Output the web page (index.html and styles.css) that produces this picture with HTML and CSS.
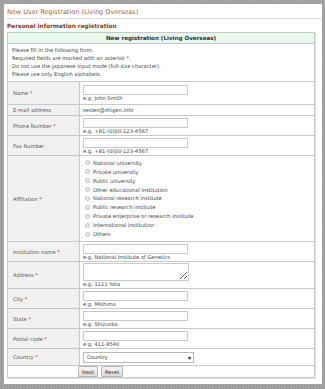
FILE: index.html
```html
<!DOCTYPE html>
<html lang="en">
<head>
    <meta charset="UTF-8">
    <meta name="viewport" content="width=device-width, initial-scale=1.0">
    <title>New User Registration (Living Overseas)</title>
    <link rel="stylesheet" href="styles.css">
</head>
<body>
    <div class="page">
        <h1 class="page-title">New User Registration (Living Overseas)</h1>
        <h2 class="section-title">Personal information registration</h2>
        <form class="reg-form">
            <table class="reg-table">
                <tr>
                    <th colspan="2" class="table-head">New registration (Living Overseas)</th>
                </tr>
                <tr>
                    <td colspan="2" class="notes">
                        Please fill in the following form.<br>
                        Required fields are marked with an asterisk <span class="req">*</span>.<br>
                        Do not use the Japanese input mode (full-size character).<br>
                        Please use only English alphabets.
                    </td>
                </tr>
                <tr class="row-name">
                    <td class="label">Name <span class="req">*</span></td>
                    <td class="value"><input type="text" class="text-in"><div class="hint">e.g. John Smith</div></td>
                </tr>
                <tr class="row-mail">
                    <td class="label">E-mail address</td>
                    <td class="value">testen@shigen.info</td>
                </tr>
                <tr class="row-std">
                    <td class="label">Phone Number <span class="req">*</span></td>
                    <td class="value"><input type="text" class="text-in"><div class="hint">e.g. +81-(0)00-123-4567</div></td>
                </tr>
                <tr class="row-std">
                    <td class="label">Fax Number</td>
                    <td class="value"><input type="text" class="text-in"><div class="hint">e.g. +81-(0)00-123-4567</div></td>
                </tr>
                <tr class="row-aff">
                    <td class="label">Affiliation <span class="req">*</span></td>
                    <td class="value">
                        <div class="radio-list">
                            <label class="radio-item"><input type="radio" name="aff"> National university</label>
                            <label class="radio-item"><input type="radio" name="aff"> Private university</label>
                            <label class="radio-item"><input type="radio" name="aff"> Public university</label>
                            <label class="radio-item"><input type="radio" name="aff"> Other educational institution</label>
                            <label class="radio-item"><input type="radio" name="aff"> National research institute</label>
                            <label class="radio-item"><input type="radio" name="aff"> Public research institute</label>
                            <label class="radio-item"><input type="radio" name="aff"> Private enterprise or research institute</label>
                            <label class="radio-item"><input type="radio" name="aff"> International institution</label>
                            <label class="radio-item"><input type="radio" name="aff"> Others</label>
                        </div>
                    </td>
                </tr>
                <tr class="row-std">
                    <td class="label">Institution name <span class="req">*</span></td>
                    <td class="value"><input type="text" class="text-in"><div class="hint">e.g. National Institute of Genetics</div></td>
                </tr>
                <tr class="row-addr">
                    <td class="label">Address <span class="req">*</span></td>
                    <td class="value"><textarea class="area-in"></textarea><div class="hint">e.g. 1111 Yata</div></td>
                </tr>
                <tr class="row-std">
                    <td class="label">City <span class="req">*</span></td>
                    <td class="value"><input type="text" class="text-in"><div class="hint">e.g. Mishima</div></td>
                </tr>
                <tr class="row-std">
                    <td class="label">State <span class="req">*</span></td>
                    <td class="value"><input type="text" class="text-in"><div class="hint">e.g. Shizuoka</div></td>
                </tr>
                <tr class="row-std">
                    <td class="label">Postal code <span class="req">*</span></td>
                    <td class="value"><input type="text" class="text-in"><div class="hint">e.g. 411-8540</div></td>
                </tr>
                <tr class="row-country">
                    <td class="label">Country <span class="req">*</span></td>
                    <td class="value">
                        <div class="select-box">
                            <select class="select-in">
                                <option>Country</option>
                            </select>
                        </div>
                    </td>
                </tr>
                <tr>
                    <td colspan="2" class="actions">
                        <button type="button" class="btn">Next</button>
                        <button type="reset" class="btn">Reset</button>
                    </td>
                </tr>
            </table>
        </form>
    </div>
</body>
</html>
```
FILE: styles.css
```css
html, body {
    margin: 0;
    padding: 0;
}
body {
    background-color: #a2a2a2;
    background-image: radial-gradient(#8c8c8c 0.8px, transparent 0.9px);
    background-size: 3px 3px;
    font-family: "DejaVu Sans", Verdana, sans-serif;
    font-size: 5.2px;
    color: #444;
    height: 389px;
    padding: 4px 3px 5px 4px;
    box-sizing: border-box;
    overflow: hidden;
}
.page {
    background: #fff;
    padding: 2px 0 6px 3px;
}
.page-title {
    margin: 0;
    font-size: 6.5px;
    font-weight: normal;
    color: #a0604a;
    line-height: 11px;
    padding-top: 1px;
    border-bottom: 1px solid #ddd;
}
.section-title {
    margin: 0;
    font-size: 5.8px;
    font-weight: bold;
    color: #8b3518;
    line-height: 12px;
    padding-top: 1px;
}
.reg-form {
    margin: 0;
    padding-right: 7px;
}
.reg-table {
    width: 100%;
    border-collapse: collapse;
    border: 1px solid #c8c8c8;
    box-shadow: 1px 1px 0 #e2e2e2;
}
.reg-table td,
.reg-table th {
    border: 1px solid #c8c8c8;
    padding: 0;
    vertical-align: middle;
}
.table-head {
    background: #e7f8ec;
    color: #333;
    font-weight: bold;
    font-size: 5.6px;
    height: 10px;
    text-align: center;
}
.notes {
    padding: 2px 4px 3px !important;
    line-height: 8px;
    color: #444;
}
.req {
    color: #e02020;
}
.label {
    width: 66px;
    padding-left: 5px !important;
    color: #555;
    background-color: #f1f1f1;
    background-image: radial-gradient(#e2e2e2 0.6px, transparent 0.7px);
    background-size: 4px 4px;
}
.value {
    padding: 0 0 0 3px !important;
    color: #444;
}
.row-name td { height: 22px; }
.row-mail td { height: 10px; }
.row-std td { height: 19px; }
.row-aff td { height: 85px; }
.row-addr td { height: 26px; }
.row-country td { height: 16px; }
.text-in {
    display: block;
    width: 105px;
    height: 10px;
    box-sizing: border-box;
    margin: 1px 0 0;
    border: 1px solid #c9c9c9;
    padding: 0;
    font-size: 5px;
}
.area-in {
    display: block;
    width: 106px;
    height: 18px;
    box-sizing: border-box;
    margin: 1px 0 0;
    border: 1px solid #c9c9c9;
    padding: 0;
    font-size: 5px;
    resize: both;
}
.hint {
    line-height: 7px;
    color: #444;
}
.radio-list {
    display: flex;
    flex-direction: column;
    padding-left: 2px;
}
.radio-item {
    display: flex;
    align-items: center;
    gap: 3px;
    height: 8.9px;
}
.radio-item input {
    appearance: none;
    -webkit-appearance: none;
    width: 5px;
    height: 5px;
    margin: 0;
    border: 1px solid #c4c4c4;
    border-radius: 50%;
    background: radial-gradient(circle at 40% 40%, #f4f4f4, #d6d6d6);
    box-sizing: border-box;
}
.select-box {
    position: relative;
    width: 111px;
}
.select-in {
    appearance: none;
    -webkit-appearance: none;
    display: block;
    width: 111px;
    height: 11px;
    box-sizing: border-box;
    border: 1px solid #bbb;
    background: #fff;
    padding: 0 3px;
    font-family: "DejaVu Sans", Verdana, sans-serif;
    font-size: 5.2px;
    color: #333;
}
.select-box::after {
    content: "\25BE";
    position: absolute;
    right: 3px;
    top: 1px;
    font-size: 6px;
    line-height: 9px;
    color: #222;
    pointer-events: none;
}
.actions {
    height: 11px;
    padding-left: 70px !important;
}
.btn {
    height: 11px;
    padding: 0 3px;
    margin: 0 1px 0 0;
    border: 1px solid #b8b8b8;
    border-radius: 1px;
    background: linear-gradient(#f6f6f6, #dcdcdc);
    font-family: "DejaVu Sans", Verdana, sans-serif;
    font-size: 5.2px;
    color: #333;
    vertical-align: middle;
}
```
